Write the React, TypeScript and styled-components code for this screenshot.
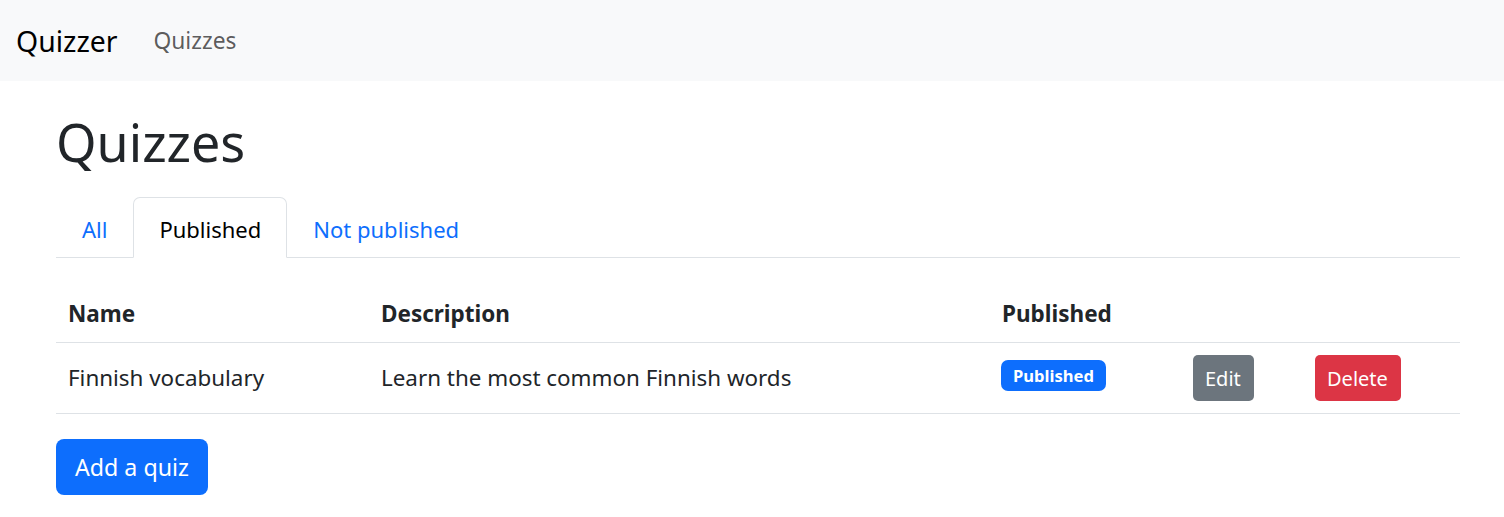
import React from "react";
import styled, { createGlobalStyle } from "styled-components";

const Global = createGlobalStyle`
  html, body { margin: 0; padding: 0; background: #fff; }
  body {
    font-family: "Noto Sans", "Open Sans", sans-serif;
    color: #212529;
    font-size: 22.4px;
    line-height: 1.5;
  }
  * { box-sizing: border-box; }
`;

const Navbar = styled.nav`
  height: 81px;
  background: #f8f9fa;
  display: flex;
  align-items: center;
  padding: 0 16px;
  gap: 36px;
`;

const Brand = styled.a`
  font-size: 28.4px;
  color: #000;
  text-decoration: none;
  line-height: 1.5;
  margin-top: 2px;
`;

const NavLink = styled.a`
  font-size: 22.8px;
  color: rgba(0, 0, 0, 0.65);
  text-decoration: none;
  margin-top: 2px;
`;

const Container = styled.main`
  width: 1404px;
  margin-left: 56px;
  padding-top: 30px;
`;

const Title = styled.h1`
  margin: 0 0 24px;
  font-size: 52px;
  font-weight: 400;
  line-height: 1.2;
`;

const Tabs = styled.ul`
  list-style: none;
  margin: 0;
  padding: 0;
  display: flex;
  border-bottom: 1px solid #dee2e6;
`;

const Tab = styled.li<{ $active?: boolean }>`
  margin-bottom: -1px;
  padding: 16px 25px 13px;
  height: 61px;
  font-size: 22px;
  line-height: 30px;
  color: ${(p) => (p.$active ? "#000" : "#0d6efd")};
  background: ${(p) => (p.$active ? "#fff" : "transparent")};
  border: 1px solid ${(p) => (p.$active ? "#dee2e6" : "transparent")};
  border-bottom-color: ${(p) => (p.$active ? "#fff" : "transparent")};
  border-radius: 7px 7px 0 0;
  cursor: pointer;
`;

const Table = styled.table`
  margin-top: 24px;
  width: 100%;
  border-collapse: collapse;
  table-layout: fixed;
`;

const Th = styled.th<{ $w: number }>`
  width: ${(p) => p.$w}px;
  text-align: left;
  font-weight: 700;
  padding: 17px 12px 13px;
  border-bottom: 1px solid #dee2e6;
  font-size: 22.5px;
  line-height: 30px;
`;

const Td = styled.td`
  padding: 12px 12px;
  border-bottom: 1px solid #dee2e6;
  font-size: 22.4px;
  line-height: 30px;
  vertical-align: middle;
`;

const Badge = styled.span`
  display: inline-block;
  background: #0d6efd;
  color: #fff;
  font-weight: 700;
  font-size: 16.6px;
  line-height: 19px;
  padding: 6px 12px;
  border-radius: 7px;
  margin-left: -1px;
  margin-bottom: 5px;
  vertical-align: middle;
`;

const Button = styled.button<{ $variant: "secondary" | "danger" | "primary"; $large?: boolean }>`
  font-family: inherit;
  border: none;
  color: #fff;
  cursor: pointer;
  background: ${(p) =>
    p.$variant === "secondary" ? "#6c757d" : p.$variant === "danger" ? "#dc3545" : "#0d6efd"};
  font-size: ${(p) => (p.$large ? "23.2px" : "20px")};
  line-height: ${(p) => (p.$large ? "36px" : "30px")};
  padding: ${(p) => (p.$large ? "10px 19px" : "9px 13px 7px 12px")};
  border-radius: ${(p) => (p.$large ? "8px" : "5px")};
  vertical-align: middle;
`;

const Actions = styled.div`
  margin-top: 25px;
`;

export default function App() {
  return (
    <>
      <Global />
      <Navbar>
        <Brand href="#">Quizzer</Brand>
        <NavLink href="#">Quizzes</NavLink>
      </Navbar>
      <Container>
        <Title>Quizzes</Title>
        <Tabs>
          <Tab>All</Tab>
          <Tab $active>Published</Tab>
          <Tab>Not published</Tab>
        </Tabs>
        <Table>
          <thead>
            <tr>
              <Th $w={313}>Name</Th>
              <Th $w={621}>Description</Th>
              <Th $w={191}>Published</Th>
              <Th $w={122}></Th>
              <Th $w={157}></Th>
            </tr>
          </thead>
          <tbody>
            <tr>
              <Td>Finnish vocabulary</Td>
              <Td>Learn the most common Finnish words</Td>
              <Td>
                <Badge>Published</Badge>
              </Td>
              <Td>
                <Button $variant="secondary">Edit</Button>
              </Td>
              <Td>
                <Button $variant="danger">Delete</Button>
              </Td>
            </tr>
          </tbody>
        </Table>
        <Actions>
          <Button $variant="primary" $large>
            Add a quiz
          </Button>
        </Actions>
      </Container>
    </>
  );
}
